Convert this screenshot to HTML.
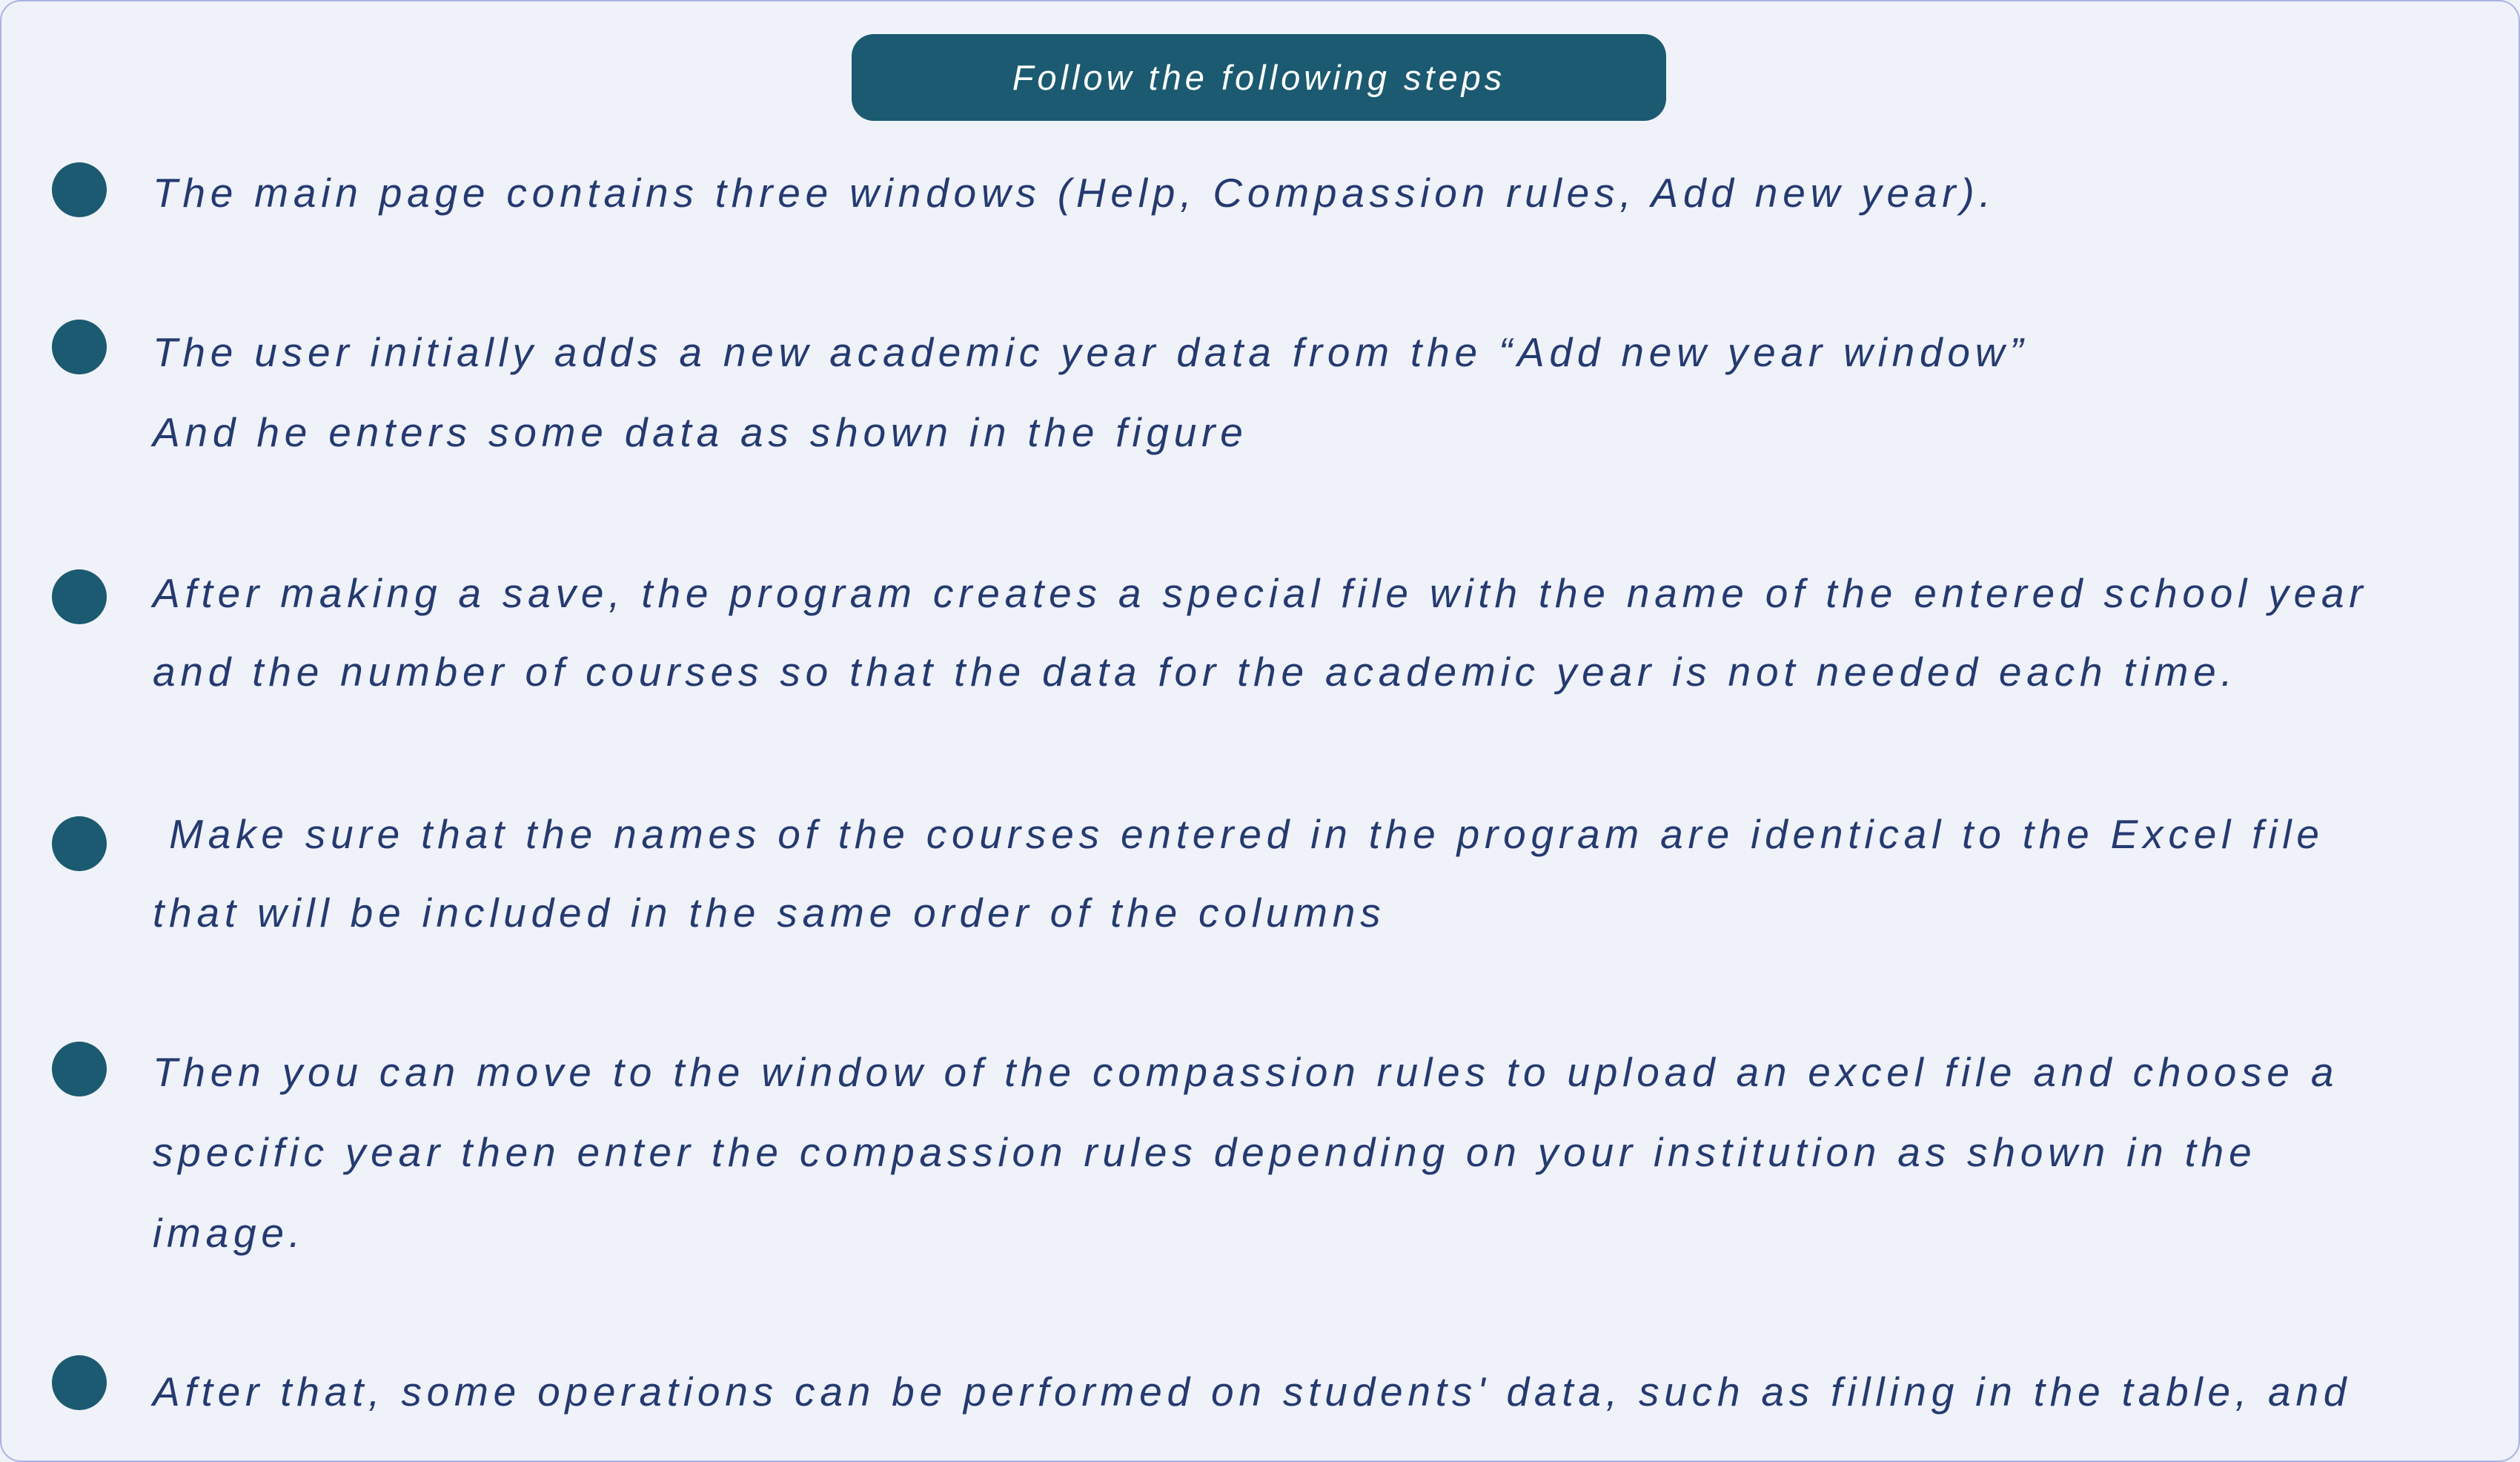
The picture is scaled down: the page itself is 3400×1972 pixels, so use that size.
<!DOCTYPE html>
<html><head><meta charset="utf-8"><style>
html,body{margin:0;padding:0;}
body{width:3400px;height:1972px;background:#f0f2fa;position:relative;overflow:hidden;font-family:"Liberation Sans",sans-serif;}
.frame{position:absolute;left:0;top:0;width:3396px;height:1968px;border:2px solid #aab2e2;border-radius:28px;}
.btn{position:absolute;left:1149px;top:46px;width:1099px;height:117px;background:#1b5a70;border-radius:30px;color:#fff;font-style:italic;font-size:47px;letter-spacing:5px;text-align:center;line-height:117px;}
.dot{position:absolute;left:70px;width:74px;height:74px;border-radius:50%;background:#1b5a70;}
.l{position:absolute;left:206px;height:108px;line-height:108px;font-style:italic;font-size:55px;letter-spacing:6.8px;color:#243a70;white-space:nowrap;}
</style></head><body>
<div class="frame"></div>
<div class="btn">Follow the following steps</div>
<div class="dot" style="top:219px"></div>
<div class="dot" style="top:431px"></div>
<div class="dot" style="top:768px"></div>
<div class="dot" style="top:1101px"></div>
<div class="dot" style="top:1405px"></div>
<div class="dot" style="top:1828px"></div>
<div class="l" style="top:206px">The main page contains three windows (Help, Compassion rules, Add new year).</div>
<div class="l" style="top:421px">The user initially adds a new academic year data from the “Add new year window”</div>
<div class="l" style="top:529px">And he enters some data as shown in the figure</div>
<div class="l" style="top:746px">After making a save, the program creates a special file with the name of the entered school year</div>
<div class="l" style="top:852px">and the number of courses so that the data for the academic year is not needed each time.</div>
<div class="l" style="top:1071px">&nbsp;Make sure that the names of the courses entered in the program are identical to the Excel file</div>
<div class="l" style="top:1177px">that will be included in the same order of the columns</div>
<div class="l" style="top:1392px">Then you can move to the window of the compassion rules to upload an excel file and choose a</div>
<div class="l" style="top:1500px">specific year then enter the compassion rules depending on your institution as shown in the</div>
<div class="l" style="top:1609px">image.</div>
<div class="l" style="top:1823px">After that, some operations can be performed on students' data, such as filling in the table, and</div>
</body></html>
